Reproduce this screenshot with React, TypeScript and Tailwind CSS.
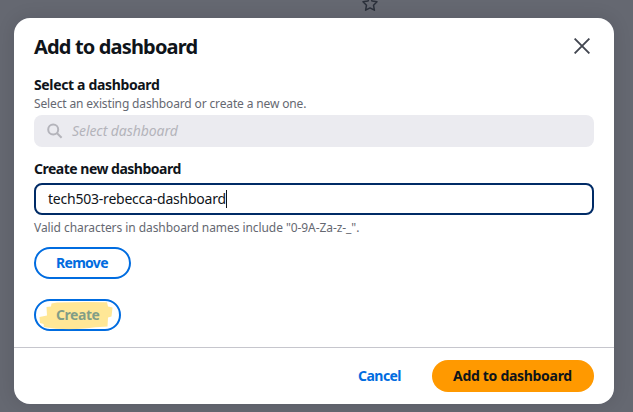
import React from "react";

function StarIcon() {
  return (
    <svg className="absolute left-[362px] top-[-5px]" width="16" height="17" viewBox="0 0 16 17" fill="none" stroke="#2b303b" strokeWidth="1.5" strokeLinejoin="round">
      <path d="M8 1.5 L10.1 6.1 L15 6.7 L11.5 10.2 L12.4 15.2 L8 12.9 L3.6 15.2 L4.5 10.2 L1 6.7 L5.9 6.1 Z" />
    </svg>
  );
}

function CloseIcon() {
  return (
    <svg width="16" height="16" viewBox="0 0 16 16" fill="none" stroke="#424650" strokeWidth="1.9">
      <path d="M0.6 0.6 L15.4 15.4 M15.4 0.6 L0.6 15.4" />
    </svg>
  );
}

function SearchIcon() {
  return (
    <svg width="16" height="16" viewBox="0 0 16 16" fill="none" stroke="#b4b4bb" strokeWidth="2">
      <circle cx="6.2" cy="6.4" r="5" />
      <path d="M9.8 10 L14.6 14.8" />
    </svg>
  );
}

function Highlight() {
  return (
    <svg className="absolute left-[3px] top-0" width="78" height="32" viewBox="0 0 78 32">
      <path d="M20 3.5 Q45 2.5 70 3.2 L71 7.5 L75.5 8.5 L74.5 17.5 L71 18.5 L70.5 27.5 Q58 28 48 29.5 Q25 31.5 7 28 L6.5 25 L3 24 L2.5 18 L10 16.5 L9.5 8 L14 7.5 L14.5 4.5 Z" fill="#ffcf2d" fillOpacity="0.5" />
    </svg>
  );
}

export default function App() {
  return (
    <main className="relative h-[412px] w-[633px] overflow-hidden bg-[#656871] pl-3.5 pt-[18px] font-['Noto_Sans','Open_Sans',sans-serif] text-[#0f141a]">
      <StarIcon />
      <section className="relative flex h-[386px] w-[600px] flex-col rounded-2xl bg-white shadow-[0_0_18px_rgba(0,7,22,0.12)]">
        <header className="flex h-[58px] items-center justify-between pl-5 pr-6">
          <h1 className="mt-[-1px] whitespace-nowrap text-[20px] font-bold leading-6 tracking-[-0.84px]">Add to dashboard</h1>
          <button type="button" aria-label="Close" className="mt-[-2px]">
            <CloseIcon />
          </button>
        </header>
        <div className="flex flex-1 flex-col items-start px-5">
          <label className="mt-[-1px] whitespace-nowrap text-[14px] font-bold leading-5 tracking-[-0.35px]">Select a dashboard</label>
          <p className="mt-px whitespace-nowrap text-[12px] leading-4 tracking-[-0.14px] text-[#656871]">Select an existing dashboard or create a new one.</p>
          <div className="mt-[3px] flex h-8 w-full items-center rounded-lg bg-[#ebebf0] pl-[13px]">
            <SearchIcon />
            <span className="ml-[9px] whitespace-nowrap text-[14px] italic leading-5 tracking-[-0.07px] text-[#b4b4bb]">Select dashboard</span>
          </div>
          <label className="mt-3 whitespace-nowrap text-[14px] font-bold leading-5 tracking-[-0.5px]">Create new dashboard</label>
          <div className="mt-1 flex h-8 w-full items-center rounded-lg border-2 border-[#002b66] pl-3">
            <span className="whitespace-nowrap text-[14px] leading-5 tracking-[-0.22px]">tech503-rebecca-dashboard</span>
            <span className="h-[18px] w-px bg-[#0f141a]" />
          </div>
          <p className="mt-[5px] whitespace-nowrap text-[12px] leading-4 tracking-[-0.07px] text-[#656871]">Valid characters in dashboard names include "0-9A-Za-z-_".</p>
          <button type="button" className="mt-[11px] flex h-8 w-[97px] items-center rounded-full border-2 border-[#006ce0] pl-5 text-[14px] font-bold leading-5 tracking-[-0.7px] text-[#006ce0]">
            Remove
          </button>
          <div className="relative mt-5">
            <button type="button" className="flex h-8 w-[87px] items-center rounded-full border-2 border-[#006ce0] pl-5 text-[14px] font-bold leading-5 tracking-[-0.45px] text-[#006ce0]">
              Create
            </button>
            <Highlight />
          </div>
        </div>
        <footer className="flex h-[57px] items-center justify-end border-t border-[#c6c6cd] pr-5">
          <button type="button" className="mr-[31px] text-[14px] font-bold leading-5 tracking-[-0.55px] text-[#006ce0]">Cancel</button>
          <button type="button" className="flex h-8 w-[162px] items-center whitespace-nowrap rounded-full bg-[#ff9900] pl-[21px] text-[14px] font-bold leading-5 tracking-[-0.3px]">Add to dashboard</button>
        </footer>
      </section>
    </main>
  );
}
